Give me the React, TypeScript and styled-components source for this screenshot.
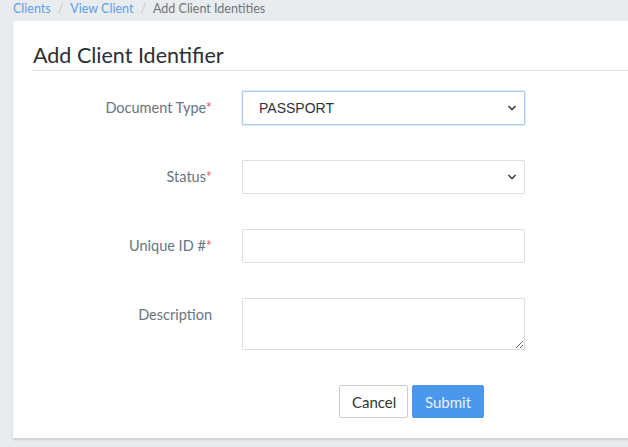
import React from "react";
import styled, { createGlobalStyle } from "styled-components";

const GlobalStyle = createGlobalStyle`
  html, body { margin: 0; padding: 0; }
  body {
    background: #e9ecef;
    font-family: Lato, "Noto Sans", sans-serif;
    overflow: hidden;
  }
`;

const Page = styled.div`
  width: 628px;
  height: 447px;
  overflow: hidden;
  box-sizing: border-box;
  padding: 0 0 0 13px;
`;

const Breadcrumb = styled.nav`
  display: flex;
  align-items: center;
  height: 21px;
  font-size: 12.5px;
  line-height: 17px;
  padding-bottom: 4px;
  box-sizing: border-box;
`;

const Crumb = styled.a<{ $active?: boolean }>`
  color: ${(p) => (p.$active ? "#6c757d" : "#5a9de8")};
  text-decoration: none;
`;

const Sep = styled.span`
  color: #c3c7cc;
  padding: 0 7px;
`;

const Card = styled.section`
  width: 800px;
  background: #fff;
  box-shadow: 0 2px 2px rgba(0, 0, 0, 0.12);
  padding: 20px;
  box-sizing: border-box;
`;

const Title = styled.h2`
  margin: 0;
  font-weight: 400;
  font-size: 21.5px;
  line-height: 28px;
  color: #2b2f33;
  padding-bottom: 1px;
  border-bottom: 1px solid #dee2e6;
`;

const Form = styled.form`
  display: grid;
  grid-template-columns: 179px 283px;
  column-gap: 30px;
  row-gap: 35px;
  margin-top: 20px;
`;

const Label = styled.label`
  text-align: right;
  font-size: 14.5px;
  line-height: 20px;
  padding-top: 7px;
  color: #69747f;
`;

const Req = styled.span`
  color: #e35d6a;
`;

const SelectWrap = styled.div`
  position: relative;
  height: 34px;
`;

const Select = styled.select<{ $focused?: boolean }>`
  appearance: none;
  -webkit-appearance: none;
  width: 100%;
  height: 34px;
  box-sizing: border-box;
  border: 1px solid ${(p) => (p.$focused ? "#a9cbf3" : "#dcdfe2")};
  box-shadow: ${(p) => (p.$focused ? "0 0 0 1px rgba(169,203,243,0.35)" : "none")};
  border-radius: 1px;
  background: #fff;
  padding: 0 30px 0 16px;
  font-family: "Liberation Sans", Arial, sans-serif;
  font-size: 14px;
  color: #333;
  outline: none;
`;

const Chevron = styled.svg`
  position: absolute;
  right: 8px;
  top: 13px;
  width: 10px;
  height: 8px;
  pointer-events: none;
`;

const Input = styled.input`
  width: 100%;
  height: 34px;
  box-sizing: border-box;
  border: 1px solid #dcdfe2;
  border-radius: 1px;
  padding: 0 12px;
  font-size: 14px;
  outline: none;
`;

const TextArea = styled.textarea`
  width: 100%;
  height: 52px;
  box-sizing: border-box;
  border: 1px solid #dcdfe2;
  border-radius: 1px;
  padding: 6px 12px;
  font-size: 14px;
  display: block;
  outline: none;
`;

const Actions = styled.div`
  grid-column: 2;
  display: flex;
  gap: 4px;
  padding-left: 97px;
`;

const Button = styled.button<{ $primary?: boolean }>`
  height: 33px;
  box-sizing: border-box;
  border-radius: 2px;
  border: 1px solid ${(p) => (p.$primary ? "#4a97ec" : "#c9cdd1")};
  background: ${(p) => (p.$primary ? "#4a97ec" : "#fff")};
  color: ${(p) => (p.$primary ? "#e8f1fc" : "#333")};
  font-family: Lato, sans-serif;
  font-size: 15px;
  padding: 0 12px;
  width: ${(p) => (p.$primary ? "72px" : "69px")};
`;

const ChevronIcon = () => (
  <Chevron viewBox="0 0 10 8">
    <path d="M1.5 2 L5 5.5 L8.5 2" fill="none" stroke="#444" strokeWidth="1.6" />
  </Chevron>
);

export default function App() {
  return (
    <>
      <GlobalStyle />
      <Page>
        <Breadcrumb>
          <Crumb href="#">Clients</Crumb>
          <Sep>/</Sep>
          <Crumb href="#">View Client</Crumb>
          <Sep>/</Sep>
          <Crumb $active>Add Client Identities</Crumb>
        </Breadcrumb>
        <Card>
          <Title>Add Client Identifier</Title>
          <Form onSubmit={(e) => e.preventDefault()}>
            <Label>
              Document Type<Req>*</Req>
            </Label>
            <SelectWrap>
              <Select $focused defaultValue="PASSPORT">
                <option>PASSPORT</option>
              </Select>
              <ChevronIcon />
            </SelectWrap>

            <Label>
              Status<Req>*</Req>
            </Label>
            <SelectWrap>
              <Select defaultValue="">
                <option value=""></option>
              </Select>
              <ChevronIcon />
            </SelectWrap>

            <Label>
              Unique ID #<Req>*</Req>
            </Label>
            <Input />

            <Label>Description</Label>
            <TextArea />

            <Actions>
              <Button type="button">Cancel</Button>
              <Button type="submit" $primary>
                Submit
              </Button>
            </Actions>
          </Form>
        </Card>
      </Page>
    </>
  );
}
